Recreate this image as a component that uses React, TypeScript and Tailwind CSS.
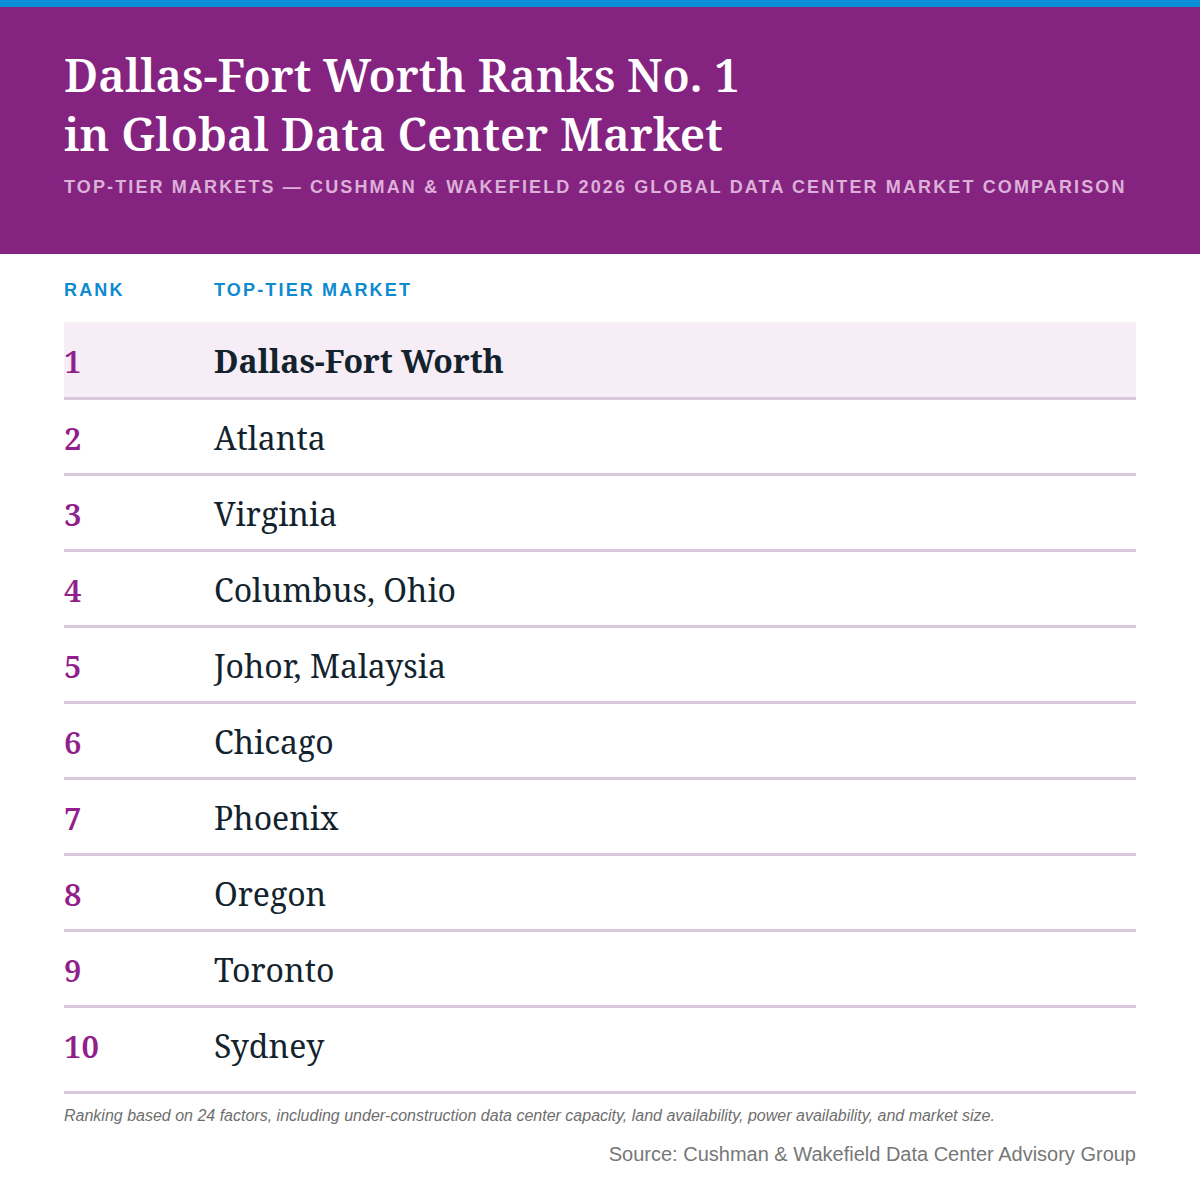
import React from "react";

const serif = { fontFamily: '"Noto Serif", "DejaVu Serif", serif' };
const sans = { fontFamily: '"Liberation Sans", Arial, sans-serif' };

const markets = [
  "Dallas-Fort Worth",
  "Atlanta",
  "Virginia",
  "Columbus, Ohio",
  "Johor, Malaysia",
  "Chicago",
  "Phoenix",
  "Oregon",
  "Toronto",
  "Sydney",
];

export default function App() {
  return (
    <div className="w-[1200px] h-[1198px] bg-white overflow-hidden">
      <div className="h-[7px] bg-[#0a8ed6]" />
      <header className="h-[247px] bg-[#852381] px-16 pt-[38px]">
        <h1
          className="text-[45.5px] leading-[59px] font-semibold text-white"
          style={serif}
        >
          Dallas-Fort Worth Ranks No. 1
          <br />
          in Global Data Center Market
        </h1>
        <p
          className="mt-[14px] text-[18px] leading-[21px] font-bold tracking-[0.118em] text-[#dcb1d8] whitespace-nowrap"
          style={sans}
        >
          TOP-TIER MARKETS — CUSHMAN &amp; WAKEFIELD 2026 GLOBAL DATA CENTER
          MARKET COMPARISON
        </p>
      </header>
      <main className="px-16">
        <div
          className="flex mt-[26px] h-[21px] text-[18px] leading-[21px] font-bold tracking-[0.12em] text-[#0d8ad0]"
          style={sans}
        >
          <div className="w-[150px]">RANK</div>
          <div>TOP-TIER MARKET</div>
        </div>
        <div className="mt-[21px]">
          {markets.map((m, i) => {
            const first = i === 0;
            const last = i === markets.length - 1;
            return (
              <div
                key={m}
                className={
                  "flex items-baseline border-b-[3px] border-[#d9c8dc] " +
                  (first
                    ? "bg-[#f7edf6] h-[78px] pt-[15px]"
                    : last
                      ? "h-[86px] pt-[14px]"
                      : "h-[76px] pt-[14px]")
                }
                style={serif}
              >
                <div className="w-[150px] text-[31px] font-semibold text-[#901f8c]">
                  {i + 1}
                </div>
                <div
                  className={
                    "text-[32px] text-[#13232d] " + (first ? "font-bold" : "")
                  }
                >
                  {m}
                </div>
              </div>
            );
          })}
        </div>
        <p
          className="mt-[13px] text-[16px] leading-[18px] italic text-[#6e6e6e]"
          style={sans}
        >
          Ranking based on 24 factors, including under-construction data center
          capacity, land availability, power availability, and market size.
        </p>
        <p
          className="mt-[18px] text-[20px] leading-[23px] text-right text-[#777777]"
          style={sans}
        >
          Source: Cushman &amp; Wakefield Data Center Advisory Group
        </p>
      </main>
    </div>
  );
}
